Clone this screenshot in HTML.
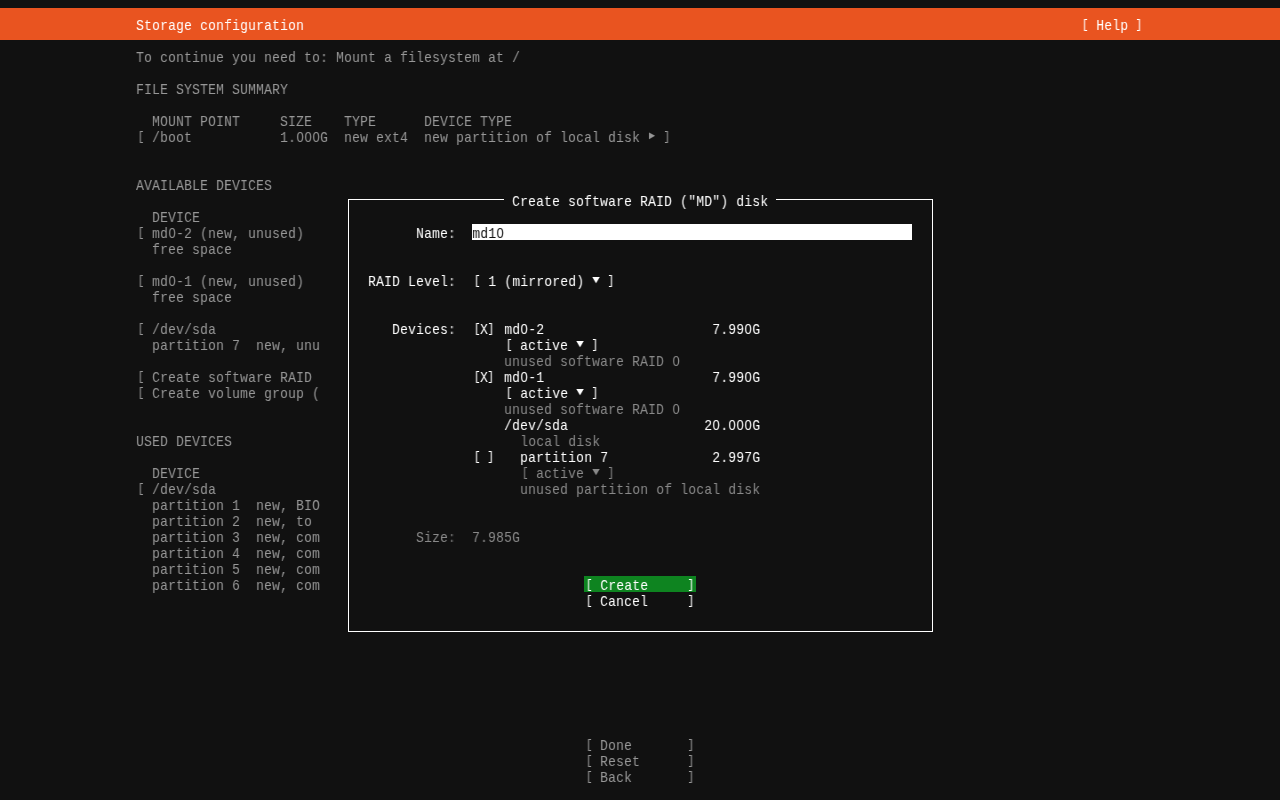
<!DOCTYPE html>
<html lang="en">
<head>
<meta charset="utf-8">
<title>Storage configuration</title>
<style>
html,body{margin:0;padding:0;background:#111111;}
body{width:1280px;height:800px;overflow:hidden;position:relative;}
#bar{position:absolute;left:0;top:8px;width:1280px;height:32px;background:#E95420;}
#dlg{position:absolute;left:348px;top:199px;width:585px;height:433px;box-sizing:border-box;border:1px solid #ffffff;}
#gap{position:absolute;left:504px;top:198px;width:272px;height:3px;background:#111111;}
#inp{position:absolute;left:472px;top:224px;width:440px;height:16px;background:#ffffff;}
#btn{position:absolute;left:584px;top:576px;width:112px;height:16px;background:#0E8420;}
#scr{position:absolute;left:0;top:3px;will-change:transform;width:1440px;height:800px;transform:scaleX(0.8888889);transform-origin:0 0;
  font-family:"Liberation Mono","DejaVu Sans Mono",monospace;font-size:15px;line-height:16px;color:#979797;}
.r{height:16px;white-space:pre;}
.b{color:#979797;}
.w{color:#ffffff;}
.g{color:#898989;}
.k{color:#111111;}
i{font-style:normal;display:inline-block;width:9px;height:16px;vertical-align:top;text-align:center;overflow:visible;}
i.td{font-size:11px;line-height:11px;transform:scaleX(1.3);}
i.tr{font-size:11px;line-height:11px;transform:scaleX(1.1);}
b{font-weight:normal;display:inline-block;width:9px;height:16px;vertical-align:top;font-size:13px;line-height:16px;position:relative;top:-2px;}
b.l{text-align:right;left:0.6px;}
b.e{text-align:left;left:-1px;}
u{text-decoration:none;font-family:"Liberation Sans",sans-serif;display:inline-block;width:9px;height:16px;vertical-align:top;line-height:11.6px;text-align:center;}

</style>
</head>
<body>
<div id="bar"></div>
<div id="dlg"></div>
<div id="gap"></div>
<div id="inp"></div>
<div id="btn"></div>
<div id="scr">
<div class="r"></div>
<div class="r">                 <span class="w">Storage configuration                                                                                                 <b class="l">[</b> Help <b class="e">]</b></span></div>
<div class="r"></div>
<div class="r">                 <span class="b">To continue you need to: Mount a filesystem at /</span></div>
<div class="r"></div>
<div class="r">                 <span class="b">FILE SYSTEM SUMMARY</span></div>
<div class="r"></div>
<div class="r">                   <span class="b">MOUNT POINT     SIZE    TYPE      DEVICE TYPE</span></div>
<div class="r">                 <span class="b"><b class="l">[</b> /boot           1.<u>0</u><u>0</u><u>0</u>G  new ext4  new partition of local disk <i class="tr">►</i> <b class="e">]</b></span></div>
<div class="r"></div>
<div class="r"></div>
<div class="r">                 <span class="b">AVAILABLE DEVICES</span></div>
<div class="r">                                                                <span class="w">Create software RAID ("MD") disk</span></div>
<div class="r">                   <span class="b">DEVICE</span></div>
<div class="r">                 <span class="b"><b class="l">[</b> md<u>0</u>-2 (new, unused)</span>              <span class="w">Name:</span>  <span class="k">md1<u>0</u></span></div>
<div class="r">                   <span class="b">free space</span></div>
<div class="r"></div>
<div class="r">                 <span class="b"><b class="l">[</b> md<u>0</u>-1 (new, unused)</span>        <span class="w">RAID Level:  <b class="l">[</b> 1 (mirrored) <i class="td">▼</i> <b class="e">]</b></span></div>
<div class="r">                   <span class="b">free space</span></div>
<div class="r"></div>
<div class="r">                 <span class="b"><b class="l">[</b> /dev/sda</span>                      <span class="w">Devices:  <b class="l">[</b>X<b class="e">]</b> md<u>0</u>-2                     7.99<u>0</u>G</span></div>
<div class="r">                   <span class="b">partition 7  new, unu</span>                       <span class="w"><b class="l">[</b> active <i class="td">▼</i> <b class="e">]</b></span></div>
<div class="r">                                                               <span class="g">unused software RAID <u>0</u></span></div>
<div class="r">                 <span class="b"><b class="l">[</b> Create software RAID</span>                    <span class="w"><b class="l">[</b>X<b class="e">]</b> md<u>0</u>-1                     7.99<u>0</u>G</span></div>
<div class="r">                 <span class="b"><b class="l">[</b> Create volume group (</span>                       <span class="w"><b class="l">[</b> active <i class="td">▼</i> <b class="e">]</b></span></div>
<div class="r">                                                               <span class="g">unused software RAID <u>0</u></span></div>
<div class="r">                                                               <span class="w">/dev/sda                 2<u>0</u>.<u>0</u><u>0</u><u>0</u>G</span></div>
<div class="r">                 <span class="b">USED DEVICES</span>                                    <span class="g">local disk</span></div>
<div class="r">                                                           <span class="w"><b class="l">[</b> <b class="e">]</b>   partition 7             2.997G</span></div>
<div class="r">                   <span class="b">DEVICE</span>                                        <span class="g"><b class="l">[</b> active <i class="td">▼</i> <b class="e">]</b></span></div>
<div class="r">                 <span class="b"><b class="l">[</b> /dev/sda</span>                                      <span class="g">unused partition of local disk</span></div>
<div class="r">                   <span class="b">partition 1  new, BIO</span></div>
<div class="r">                   <span class="b">partition 2  new, to</span></div>
<div class="r">                   <span class="b">partition 3  new, com</span>            <span class="g">Size:  7.985G</span></div>
<div class="r">                   <span class="b">partition 4  new, com</span></div>
<div class="r">                   <span class="b">partition 5  new, com</span></div>
<div class="r">                   <span class="b">partition 6  new, com</span>                                 <span class="w"><b class="l">[</b> Create     <b class="e">]</b></span></div>
<div class="r">                                                                         <span class="w"><b class="l">[</b> Cancel     <b class="e">]</b></span></div>
<div class="r"></div>
<div class="r"></div>
<div class="r"></div>
<div class="r"></div>
<div class="r"></div>
<div class="r"></div>
<div class="r"></div>
<div class="r"></div>
<div class="r">                                                                         <span class="b"><b class="l">[</b> Done       <b class="e">]</b></span></div>
<div class="r">                                                                         <span class="b"><b class="l">[</b> Reset      <b class="e">]</b></span></div>
<div class="r">                                                                         <span class="b"><b class="l">[</b> Back       <b class="e">]</b></span></div>
<div class="r"></div>
</div>
</body>
</html>
